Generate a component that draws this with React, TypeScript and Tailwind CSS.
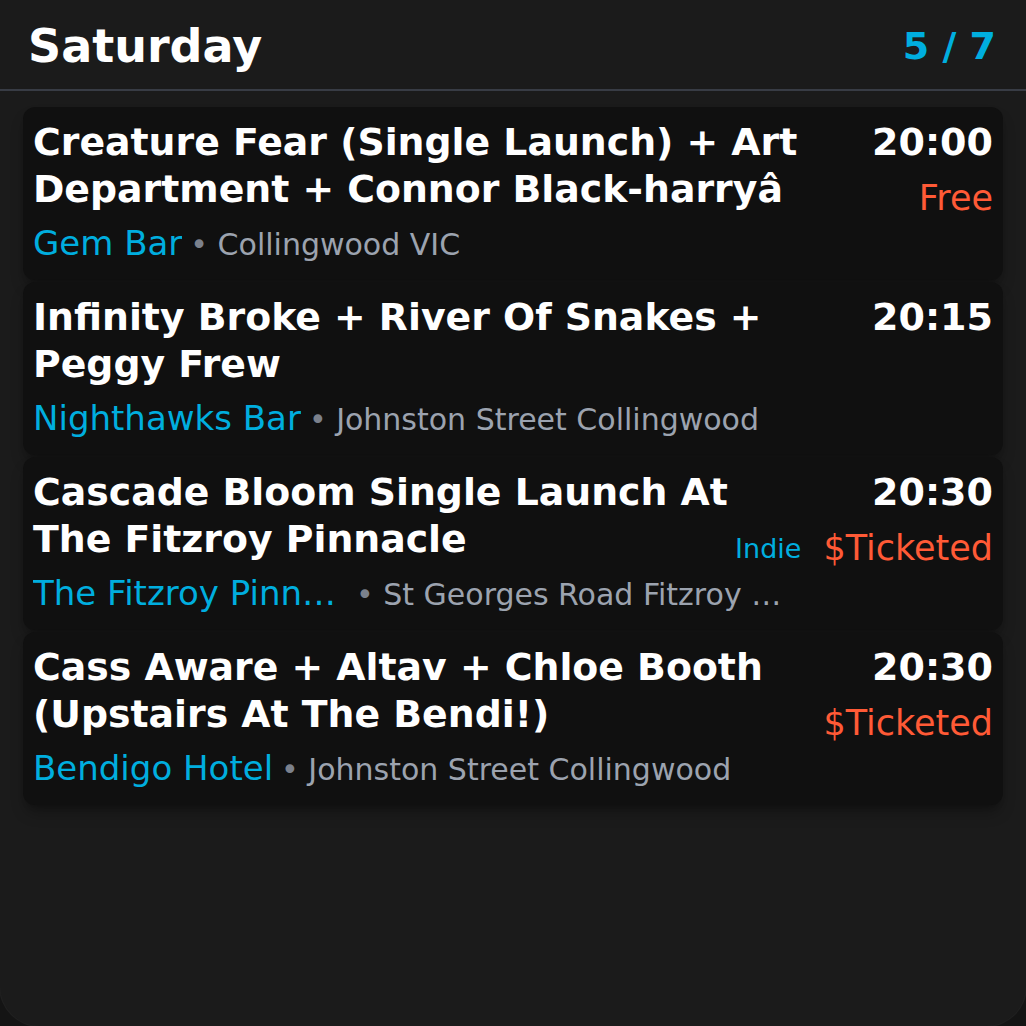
import React from 'react';

type Gig = {
  title: string;
  time: string;
  venue: string;
  address: string;
  price?: string;
  genre?: string;
};

const gigs: Gig[] = [
  {
    title: 'Creature Fear (Single Launch) + Art Department + Connor Black-harryâ',
    time: '20:00',
    venue: 'Gem Bar',
    address: 'Collingwood VIC',
    price: 'Free',
  },
  {
    title: 'Infinity Broke + River Of Snakes + Peggy Frew',
    time: '20:15',
    venue: 'Nighthawks Bar',
    address: 'Johnston Street Collingwood',
  },
  {
    title: 'Cascade Bloom Single Launch At The Fitzroy Pinnacle',
    time: '20:30',
    venue: 'The Fitzroy Pinnacle',
    address: 'St Georges Road Fitzroy North',
    price: '$Ticketed',
    genre: 'Indie',
  },
  {
    title: 'Cass Aware + Altav + Chloe Booth (Upstairs At The Bendi!)',
    time: '20:30',
    venue: 'Bendigo Hotel',
    address: 'Johnston Street Collingwood',
    price: '$Ticketed',
  },
];

function GigCard({ gig }: { gig: Gig }) {
  return (
    <div className="h-[173px] rounded-xl bg-[#101010] px-2.5 pt-3 shadow-lg shadow-black/30">
      <div className="flex min-h-[96px] items-start">
        <h2 className="min-w-0 flex-1 text-[37.8px] font-bold leading-[47px] text-white">{gig.title}</h2>
        <div className="flex shrink-0 flex-col items-end">
          <span className="text-[38px] font-bold leading-[47px] text-white">{gig.time}</span>
          {gig.price && (
            <div className="mt-4 flex items-center gap-[22px] leading-[33px]">
              {gig.genre && <span className="text-[27px] text-[#00aedf]">{gig.genre}</span>}
              <span className="text-[35px] text-[#ff5a36]">{gig.price}</span>
            </div>
          )}
        </div>
      </div>
      <div className="mt-1.5 flex max-w-[760px] items-baseline gap-2 leading-[44px]">
        <span className="max-w-[315px] shrink-0 truncate text-[34px] text-[#00aedf]">{gig.venue}</span>
        <span className="min-w-0 truncate text-[30px] text-[#9ca3af]">
          <span className="text-[#7b818c]">•</span> {gig.address}
        </span>
      </div>
    </div>
  );
}

export default function App() {
  return (
    <div className="min-h-screen bg-[#141414] font-['DejaVu_Sans',sans-serif]">
      <div className="flex h-[1026px] flex-col overflow-hidden rounded-b-[40px] bg-[#1b1b1b] ring-1 ring-white/5">
        <header className="flex h-[89px] shrink-0 items-center justify-between pt-[2px] pl-7 pr-[30px]">
          <h1 className="text-[46px] font-bold leading-none text-white">Saturday</h1>
          <span className="text-[38px] font-bold leading-none text-[#00aedf]">5 / 7</span>
        </header>
        <div className="h-[2px] bg-[#383c45]" />
        <div className="flex flex-col gap-[2px] px-[23px] pt-4">
          {gigs.map((gig) => (
            <GigCard key={gig.title} gig={gig} />
          ))}
        </div>
      </div>
    </div>
  );
}
